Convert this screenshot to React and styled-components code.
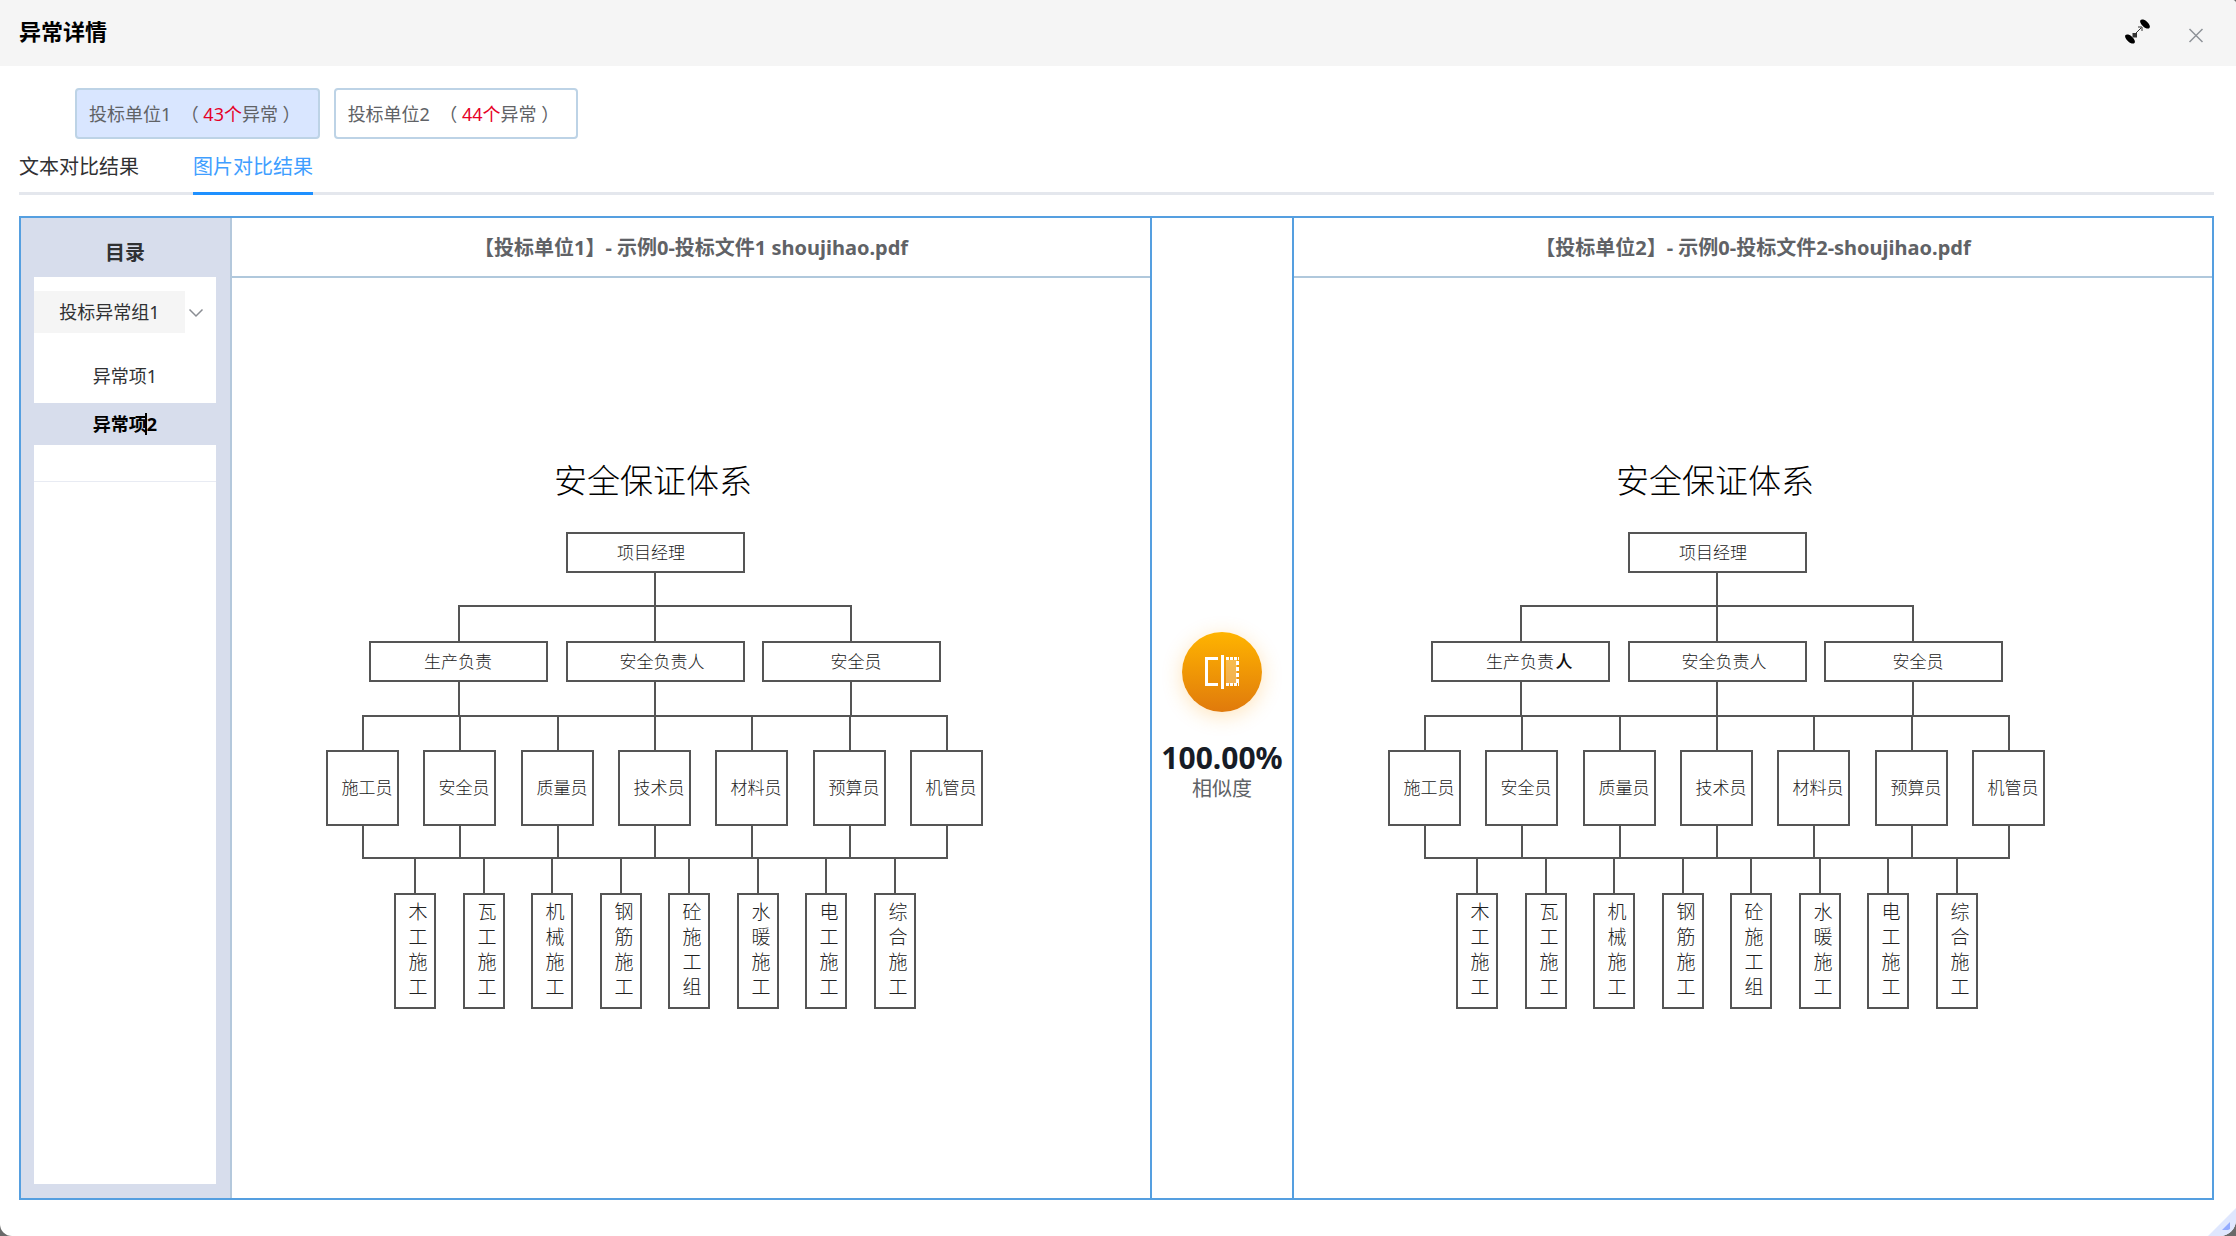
import { useState } from 'react';
import styled, { createGlobalStyle } from 'styled-components';

const GlobalStyle = createGlobalStyle`
	*, *::before, *::after {
		box-sizing: border-box;
	}

	body {
		margin: 0;
		background: #6a6a6a;
		font-family: 'Noto Sans', 'Noto Sans CJK SC', sans-serif;
		font-size: 18px;
		color: #303133;
	}

	button {
		font: inherit;
		color: inherit;
		padding: 0;
		border: 0;
		background: none;
		cursor: pointer;
	}
`;

const Dialog = styled.main`
	position: relative;
	display: flex;
	flex-direction: column;
	min-height: 100vh;
	background: #fff;
	border-radius: 0 4px 16px 12px;
	overflow: hidden;
`;

const Header = styled.header`
	display: flex;
	align-items: center;
	justify-content: space-between;
	height: 66px;
	padding: 0 32px 4px 19px;
	background: #f5f5f5;
`;

const Title = styled.h1`
	margin: 0;
	font-size: 22px;
	line-height: 30px;
	font-weight: 700;
	color: #000;
`;

const HeaderActions = styled.div`
	display: flex;
	align-items: center;
	gap: 36px;
`;

const IconButton = styled.button`
	display: flex;
`;

const Content = styled.div`
	flex: 1;
	display: flex;
	flex-direction: column;
	padding: 22px 22px 36px 19px;
`;

const UnitList = styled.div`
	display: flex;
	gap: 14px;
	padding-left: 56px;
`;

const UnitButton = styled.button`
	display: flex;
	align-items: center;
	height: 51px;
	padding: 0 17px 2px 12px;
	border: 2px solid #bdd3e6;
	border-radius: 4px;
	background: ${ props => props.$active ? '#d9e6ff' : '#fff' };
	color: #606266;
	white-space: pre;
`;

const Count = styled.em`
	font-style: normal;
	color: #e60027;
`;

const TabList = styled.div`
	display: flex;
	gap: 54px;
	border-bottom: 3px solid #e4e7ed;
`;

const Tab = styled.button`
	height: 56px;
	margin-bottom: -3px;
	border-bottom: 3px solid ${ props => props.$active ? '#1e90ff' : 'transparent' };
	padding-top: 2px;
	font-size: 20px;
	line-height: 51px;
	color: ${ props => props.$active ? '#409eff' : '#303133' };
`;

const Compare = styled.section`
	flex: 1;
	display: grid;
	grid-template-columns: 211px minmax(0, 1fr) 144px minmax(0, 1fr);
	margin-top: 21px;
	border: 2px solid #559fe0;
`;

const Sidebar = styled.nav`
	display: flex;
	flex-direction: column;
	padding: 0 14px 14px 13px;
	background: #d7ddec;
	border-right: 2px solid #b4c8dc;
`;

const SidebarTitle = styled.h2`
	margin: 0;
	padding-top: 11px;
	height: 59px;
	font-size: 20px;
	line-height: 48px;
	text-align: center;
`;

const Catalog = styled.div`
	flex: 1;
	padding-top: 14px;
	background: #fff;
`;

const GroupButton = styled.button`
	display: flex;
	align-items: center;
	width: 100%;
	margin-bottom: 22px;
`;

const GroupName = styled.span`
	flex: 1;
	margin-right: 3px;
	background: #f5f5f5;
	line-height: 42px;
`;

const Chevron = styled.svg`
	margin-right: 12px;
`;

const ItemList = styled.ul`
	display: flex;
	flex-direction: column;
	gap: 6px;
	margin: 0;
	padding: 0 0 36px;
	list-style: none;
	border-bottom: 1px solid #e8ebf3;
`;

const ItemButton = styled.button`
	width: 100%;
	line-height: 42px;
	background: ${ props => props.$active ? '#d7ddec' : '#fff' };
	color: ${ props => props.$active ? '#000' : '#303133' };
	font-weight: ${ props => props.$active ? 700 : 400 };
`;

const Caret = styled.span`
	position: relative;

	&::after {
		content: '';
		position: absolute;
		top: 1px;
		left: -2px;
		width: 2px;
		height: 22px;
		background: #000;
	}
`;

const Panel = styled.article`
	display: flex;
	flex-direction: column;
`;

const PanelTitle = styled.h3`
	margin: 0;
	height: 60px;
	border-bottom: 2px solid #b0c8dc;
	font-size: 20px;
	line-height: 60px;
	text-align: center;
	color: #606266;
`;

const PanelBody = styled.div`
	flex: 1;
	display: flex;
	align-items: center;
	justify-content: center;
	padding: 0 70px 8px 0;
`;

const Chart = styled.svg`
	width: 660px;
	max-width: 100%;
	font-family: 'Noto Sans CJK SC', serif;
	fill: #333;
	text-anchor: middle;
`;

const ChartLines = styled.g`
	fill: none;
	stroke: #555;
	stroke-width: 2px;
`;

const ChartTitle = styled.text`
	font-size: 33px;
	font-weight: 300;
	fill: #000;
`;

const ChartLabel = styled.text`
	font-size: ${ props => props.$size }px;
	font-weight: ${ props => props.$strong ? 500 : 300 };
	fill: ${ props => props.$strong ? '#111' : '#222' };
`;

const Similarity = styled.aside`
	display: flex;
	flex-direction: column;
	align-items: center;
	justify-content: center;
	padding-top: 18px;
	border: solid #559fe0;
	border-width: 0 2px;
`;

const Badge = styled.div`
	display: flex;
	align-items: center;
	justify-content: center;
	width: 80px;
	height: 80px;
	margin-bottom: 28px;
	border-radius: 50%;
	background: linear-gradient(#ffb400, #e07a0c);
	box-shadow: 0 4px 20px rgba(255, 165, 30, 0.3);
`;

const Score = styled.strong`
	font-size: 30px;
	line-height: 36px;
	color: #171c26;
`;

const ScoreLabel = styled.span`
	font-size: 20px;
	line-height: 26px;
	color: #606266;
`;

const Grip = styled.svg`
	position: absolute;
	right: 0;
	bottom: 0;
`;

const units = [
	{ name: '投标单位1', count: 43 },
	{ name: '投标单位2', count: 44 },
];

const tabs = [ '文本对比结果', '图片对比结果' ];

const managers = [
	{ x: 44, textX: 132, label: '生产负责' },
	{ x: 241, textX: 336, label: '安全负责人' },
	{ x: 437, textX: 530, label: '安全员' },
];

const staff = [ '施工员', '安全员', '质量员', '技术员', '材料员', '预算员', '机管员' ];

const teams = [ '木工施工', '瓦工施工', '机械施工', '钢筋施工', '砼施工组', '水暖施工', '电工施工', '综合施工' ];

const staffX = i => 37 + Math.round( i * 97.3 );
const teamX = i => 89 + Math.round( i * 68.5 );

const OrgChart = ( { suffix } ) => (
	<Chart viewBox="0 0 660 556" role="img" aria-label="安全保证体系">
		<ChartLines>
			<rect x="241" y="77" width="177" height="39" />
			<path d="M329 116V186M133 186V150H525V186" />
			<path d="M133 225V260M329 225V260M525 225V260" />
			<path d={ `M${ staffX( 0 ) } 260H${ staffX( 6 ) }M${ staffX( 0 ) } 402H${ staffX( 6 ) }` } />
			{ managers.map( ( { x } ) => (
				<rect key={ x } x={ x } y="186" width="177" height="39" />
			) ) }
			{ staff.map( ( name, i ) => (
				<g key={ name }>
					<path d={ `M${ staffX( i ) } 259V295M${ staffX( i ) } 369V403` } />
					<rect x={ staffX( i ) - 36 } y="295" width="71" height="74" />
				</g>
			) ) }
			{ teams.map( ( name, i ) => (
				<g key={ name }>
					<path d={ `M${ teamX( i ) } 402V438` } />
					<rect x={ teamX( i ) - 20 } y="438" width="40" height="114" />
				</g>
			) ) }
		</ChartLines>
		<ChartTitle x="327" y="37">安全保证体系</ChartTitle>
		<ChartLabel $size={ 17 } x="325" y="103">项目经理</ChartLabel>
		{ managers.map( ( { textX, label } ) => (
			<ChartLabel key={ label } $size={ 17 } x={ textX } y="212">{ label }</ChartLabel>
		) ) }
		{ suffix && <ChartLabel $size={ 17 } $strong x="176" y="212">{ suffix }</ChartLabel> }
		{ staff.map( ( name, i ) => (
			<ChartLabel key={ name } $size={ 17 } x={ staffX( i ) + 4 } y="338">{ name }</ChartLabel>
		) ) }
		{ teams.map( ( name, i ) => (
			<ChartLabel key={ name } $size={ 19 }>
				{ name.split( '' ).map( ( char, row ) => (
					<tspan key={ row } x={ teamX( i ) + 3 } y={ 463 + row * 25 }>{ char }</tspan>
				) ) }
			</ChartLabel>
		) ) }
	</Chart>
);

const ExpandIcon = () => (
	<svg width="28" height="28" viewBox="0 0 28 28" fill="none" stroke="#333">
		<g fill="#000" stroke="none">
			<ellipse cx="21" cy="7" rx="6" ry="3" transform="rotate(42 21 7)" />
			<ellipse cx="6" cy="22" rx="6" ry="3" transform="rotate(42 6 22)" />
			<path d="M8.500 16H13V20.500H8.500Z" fill="#333" />
		</g>
		<path d="M12 16L17 11M14 10H18V14" />
	</svg>
);

const CloseIcon = () => (
	<svg width="16" height="28" viewBox="0 0 16 28" fill="none" stroke="#8f9399" strokeWidth="1.500">
		<path d="M1.500 12L14.500 25M14.500 12L1.500 25" />
	</svg>
);

const CompareIcon = () => (
	<svg width="36" height="36" viewBox="0 0 36 36" fill="none" stroke="#fff" strokeWidth="3">
		<path d="M14 4.500H2.500V30.500H14" />
		<path d="M18.500 1V35" />
		<path d="M22 6H33V30H22Z" fill="#fff" fillOpacity="0.300" stroke="none" />
		<path d="M22 4.500H35" strokeDasharray="3 1" />
		<path d="M22 30.500H35" strokeDasharray="3 1" />
		<path d="M33.500 7V29" strokeDasharray="4 2" />
	</svg>
);

const App = () => {
	const [ unit, setUnit ] = useState( 0 );
	const [ tab, setTab ] = useState( 1 );
	const [ item, setItem ] = useState( 1 );

	return (
		<Dialog>
			<GlobalStyle />
			<Header>
				<Title>异常详情</Title>
				<HeaderActions>
					<IconButton aria-label="全屏"><ExpandIcon /></IconButton>
					<IconButton aria-label="关闭"><CloseIcon /></IconButton>
				</HeaderActions>
			</Header>
			<Content>
				<UnitList>
					{ units.map( ( { name, count }, i ) => (
						<UnitButton key={ name } $active={ unit === i } onClick={ () => setUnit( i ) }>
							{ name }  （ <Count>{ count }个</Count>异常 ）
						</UnitButton>
					) ) }
				</UnitList>
				<TabList role="tablist">
					{ tabs.map( ( name, i ) => (
						<Tab
							key={ name }
							role="tab"
							aria-selected={ tab === i }
							$active={ tab === i }
							onClick={ () => setTab( i ) }
						>
							{ name }
						</Tab>
					) ) }
				</TabList>
				<Compare>
					<Sidebar>
						<SidebarTitle>目录</SidebarTitle>
						<Catalog>
							<GroupButton aria-expanded="true">
								<GroupName>投标异常组1</GroupName>
								<Chevron width="16" height="16" viewBox="0 0 16 16" fill="none" stroke="#8a8d93" strokeWidth="1.500">
									<path d="M1.500 5.500L8 12L14.500 5.500" />
								</Chevron>
							</GroupButton>
							<ItemList>
								<li>
									<ItemButton $active={ item === 0 } onClick={ () => setItem( 0 ) }>异常项1</ItemButton>
								</li>
								<li>
									<ItemButton $active={ item === 1 } onClick={ () => setItem( 1 ) }>异常项<Caret />2</ItemButton>
								</li>
							</ItemList>
						</Catalog>
					</Sidebar>
					<Panel>
						<PanelTitle>【投标单位1】- 示例0-投标文件1 shoujihao.pdf</PanelTitle>
						<PanelBody>
							<OrgChart />
						</PanelBody>
					</Panel>
					<Similarity>
						<Badge><CompareIcon /></Badge>
						<Score>100.00%</Score>
						<ScoreLabel>相似度</ScoreLabel>
					</Similarity>
					<Panel>
						<PanelTitle>【投标单位2】- 示例0-投标文件2-shoujihao.pdf</PanelTitle>
						<PanelBody>
							<OrgChart suffix="人" />
						</PanelBody>
					</Panel>
				</Compare>
			</Content>
			<Grip width="28" height="28" viewBox="0 0 28 28">
				<path d="M0 28L28 0V28Z" fill="#dfe7fe" />
				<path d="M14 22L22 14V21L20 22Z" fill="#93abff" />
			</Grip>
		</Dialog>
	);
};

export default App;
